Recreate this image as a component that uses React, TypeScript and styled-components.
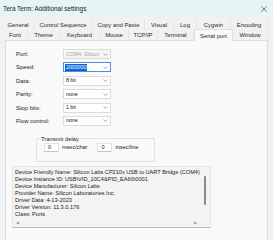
import React from 'react';
import styled, { createGlobalStyle } from 'styled-components';

const cssVarsLocal = {
  windowBg: '#f1f1f1',
  panelBg: '#f9f9f9',
  border: '#dedede',
  text: '#1b1b1b',
  font: '"Liberation Sans", Arial, sans-serif'
};

const GlobalStyle = createGlobalStyle`
  html, body {
    margin: 0;
    padding: 0;
    background: ${cssVarsLocal.windowBg};
  }
  * {
    box-sizing: border-box;
  }
`;

/**
 * Dialog window frame.
 */
const Window = styled.div`
  width: 273px;
  height: 240px;
  overflow: hidden;
  display: flex;
  flex-direction: column;
  background: ${cssVarsLocal.windowBg};
  font-family: ${cssVarsLocal.font};
  color: ${cssVarsLocal.text};
`;

const TitleBar = styled.div`
  height: 17px;
  flex-shrink: 0;
  display: flex;
  align-items: center;
  justify-content: space-between;
  padding: 0 6px 0 3px;
  background: #e5f5f3;
  font-size: 6.4px;
`;

const CloseIcon = styled.svg`
  width: 6px;
  height: 6px;
`;

const Tabs = styled.div`
  margin-top: 3px;
  padding-left: 3px;
  display: flex;
  flex-direction: column;
  flex-shrink: 0;
`;

const TabRow = styled.div`
  display: flex;
  height: 10px;
`;

const Tab = styled.div<{ $w: number; $active?: boolean }>`
  width: ${p => p.$w}px;
  display: flex;
  align-items: center;
  justify-content: center;
  font-size: 5.9px;
  color: #2a2a2a;
  white-space: nowrap;
  border-right: 1px solid ${p => (p.$active ? cssVarsLocal.border : '#e6e6e6')};
  background: ${p => (p.$active ? cssVarsLocal.panelBg : 'transparent')};
  ${p =>
    p.$active &&
    `
    border-left: 1px solid ${cssVarsLocal.border};
    border-top: 1px solid ${cssVarsLocal.border};
    margin-top: -1px;
    height: 12px;
    position: relative;
    z-index: 1;
  `}
`;

const Panel = styled.div`
  flex: 1;
  margin: 0 5px 0 5px;
  padding: 8px 0 0 10px;
  background: ${cssVarsLocal.panelBg};
  border: 1px solid ${cssVarsLocal.border};
  border-bottom: none;
  display: flex;
  flex-direction: column;
  & > * {
    flex-shrink: 0;
  }
`;

const Form = styled.div`
  display: grid;
  grid-template-columns: 47px 48px;
  grid-auto-rows: 10px;
  row-gap: 3.4px;
  align-items: center;
  font-size: 5.9px;
`;

const Label = styled.span`
  white-space: nowrap;
`;

const Combo = styled.div<{ $disabled?: boolean; $focused?: boolean }>`
  height: 10px;
  display: flex;
  align-items: center;
  justify-content: space-between;
  padding: 0 2px 0 1px;
  background: ${p => (p.$disabled ? '#f6f6f6' : '#ffffff')};
  border: 1px solid ${p => (p.$focused ? '#4a8fd8' : '#dcdcdc')};
  color: ${p => (p.$disabled ? '#a6a6a6' : cssVarsLocal.text)};
  font-size: 5.4px;
  white-space: nowrap;
  overflow: hidden;
`;

const ComboValue = styled.span<{ $selected?: boolean }>`
  padding: 0 1px;
  background: ${p => (p.$selected ? '#0a64d8' : 'transparent')};
  color: ${p => (p.$selected ? '#ffffff' : 'inherit')};
  line-height: 7px;
  letter-spacing: -0.1px;
`;

const Chevron = styled.svg`
  width: 5px;
  height: 3px;
  flex-shrink: 0;
`;

const Group = styled.fieldset`
  margin: 10px 0 0 20px;
  padding: 1px 0 0 7px;
  width: 119px;
  height: 26px;
  border: 1px solid #e2e2e2;
  border-radius: 1px;
  display: flex;
  align-items: center;
  font-size: 5.5px;
`;

const Legend = styled.legend`
  padding: 0 1px;
  margin-left: -4px;
  font-size: 5.8px;
  line-height: 6px;
`;

const DelayInput = styled.div`
  width: 15px;
  height: 9px;
  display: flex;
  align-items: center;
  padding-left: 3px;
  background: #ffffff;
  border: 1px solid #e2e2e2;
  border-bottom-color: #c4c4c4;
`;

const Unit = styled.span<{ $gap: number }>`
  margin: 0 ${p => p.$gap}px 0 3px;
  white-space: nowrap;
`;

const InfoBox = styled.div`
  margin: 4px 0 0 -4px;
  width: 199px;
  height: 62px;
  position: relative;
  background: #f3f3f3;
  border: 1px solid #e4e4e4;
  border-bottom: 1px solid #b9b9b9;
  padding: 2px 0 0 2px;
  font-size: 5.6px;
  line-height: 7px;
  white-space: nowrap;
  overflow: hidden;
`;

const VScrollThumb = styled.div`
  position: absolute;
  right: 4px;
  top: 9px;
  width: 2px;
  height: 29px;
  border-radius: 1px;
  background: #8a8a8a;
`;

const HScrollBar = styled.div`
  position: absolute;
  left: 0;
  right: 0;
  bottom: 0;
  height: 8px;
  display: flex;
  align-items: center;
  justify-content: space-between;
  padding: 0 13px 0 3px;
  color: #9a9a9a;
  font-size: 4px;
`;

const ChevronDown = () => (
  <Chevron viewBox="0 0 5 3">
    <path d="M0.5 0.5 L2.5 2.5 L4.5 0.5" fill="none" stroke="#6e6e6e" strokeWidth="0.6" />
  </Chevron>
);

const row1 = [
  ['General', 31],
  ['Control Sequence', 59],
  ['Copy and Paste', 52],
  ['Visual', 29],
  ['Log', 23],
  ['Cygwin', 34],
  ['Encoding', 37]
] as const;

const row2 = [
  ['Font', 25],
  ['Theme', 32],
  ['Keyboard', 40],
  ['Mouse', 29],
  ['TCP/IP', 29],
  ['Terminal', 36],
  ['Serial port', 39],
  ['Window', 35]
] as const;

const fields: { label: string; value: string; disabled?: boolean; focused?: boolean }[] = [
  { label: 'Port:', value: 'COM4: Silicon', disabled: true },
  { label: 'Speed:', value: '2000000', focused: true },
  { label: 'Data:', value: '8 bit' },
  { label: 'Parity:', value: 'none' },
  { label: 'Stop bits:', value: '1 bit' },
  { label: 'Flow control:', value: 'none' }
];

const info = [
  'Device Friendly Name: Silicon Labs CP210x USB to UART Bridge (COM4)',
  'Device Instance ID: USB\\VID_10C4&PID_EA60\\0001',
  'Device Manufacturer: Silicon Labs',
  'Provider Name: Silicon Laboratories Inc.',
  'Driver Data: 4-13-2023',
  'Driver Version: 11.3.0.176',
  'Class: Ports'
];

export default function App() {
  return (
    <>
      <GlobalStyle />
      <Window>
        <TitleBar>
          <span>Tera Term: Additional settings</span>
          <CloseIcon viewBox="0 0 6 6">
            <path d="M0.3 0.3 L5.7 5.7 M5.7 0.3 L0.3 5.7" stroke="#333" strokeWidth="0.6" />
          </CloseIcon>
        </TitleBar>
        <Tabs>
          <TabRow>
            {row1.map(([name, w]) => (
              <Tab key={name} $w={w}>{name}</Tab>
            ))}
          </TabRow>
          <TabRow>
            {row2.map(([name, w]) => (
              <Tab key={name} $w={w} $active={name === 'Serial port'}>{name}</Tab>
            ))}
          </TabRow>
        </Tabs>
        <Panel>
          <Form>
            {fields.map(f => (
              <React.Fragment key={f.label}>
                <Label>{f.label}</Label>
                <Combo $disabled={f.disabled} $focused={f.focused}>
                  <ComboValue $selected={f.focused}>{f.value}</ComboValue>
                  <ChevronDown />
                </Combo>
              </React.Fragment>
            ))}
          </Form>
          <Group>
            <Legend>Transmit delay</Legend>
            <DelayInput>0</DelayInput>
            <Unit $gap={10}>msec/char</Unit>
            <DelayInput>0</DelayInput>
            <Unit $gap={0}>msec/line</Unit>
          </Group>
          <InfoBox>
            {info.map(line => (
              <div key={line}>{line}</div>
            ))}
            <VScrollThumb />
            <HScrollBar>
              <span>◀</span>
              <span>▶</span>
            </HScrollBar>
          </InfoBox>
        </Panel>
      </Window>
    </>
  );
}
